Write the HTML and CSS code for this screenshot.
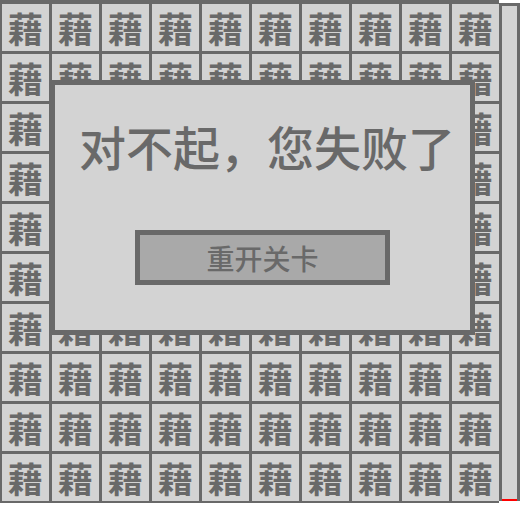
FILE: index.html
```html
<!DOCTYPE html>
<html lang="zh-CN">
<head>
<meta charset="utf-8">
<title>游戏</title>
<link rel="stylesheet" href="styles.css">
</head>
<body>
<div class="stage">
  <div class="board">
    <div class="cell">藉</div><div class="cell">藉</div><div class="cell">藉</div><div class="cell">藉</div><div class="cell">藉</div><div class="cell">藉</div><div class="cell">藉</div><div class="cell">藉</div><div class="cell">藉</div><div class="cell">藉</div>
    <div class="cell">藉</div><div class="cell">藉</div><div class="cell">藉</div><div class="cell">藉</div><div class="cell">藉</div><div class="cell">藉</div><div class="cell">藉</div><div class="cell">藉</div><div class="cell">藉</div><div class="cell">藉</div>
    <div class="cell">藉</div><div class="cell">藉</div><div class="cell">藉</div><div class="cell">藉</div><div class="cell">藉</div><div class="cell">藉</div><div class="cell">藉</div><div class="cell">藉</div><div class="cell">藉</div><div class="cell">藉</div>
    <div class="cell">藉</div><div class="cell">藉</div><div class="cell">藉</div><div class="cell">藉</div><div class="cell">藉</div><div class="cell">藉</div><div class="cell">藉</div><div class="cell">藉</div><div class="cell">藉</div><div class="cell">藉</div>
    <div class="cell">藉</div><div class="cell">藉</div><div class="cell">藉</div><div class="cell">藉</div><div class="cell">藉</div><div class="cell">藉</div><div class="cell">藉</div><div class="cell">藉</div><div class="cell">藉</div><div class="cell">藉</div>
    <div class="cell">藉</div><div class="cell">藉</div><div class="cell">藉</div><div class="cell">藉</div><div class="cell">藉</div><div class="cell">藉</div><div class="cell">藉</div><div class="cell">藉</div><div class="cell">藉</div><div class="cell">藉</div>
    <div class="cell">藉</div><div class="cell">藉</div><div class="cell">藉</div><div class="cell">藉</div><div class="cell">藉</div><div class="cell">藉</div><div class="cell">藉</div><div class="cell">藉</div><div class="cell">藉</div><div class="cell">藉</div>
    <div class="cell">藉</div><div class="cell">藉</div><div class="cell">藉</div><div class="cell">藉</div><div class="cell">藉</div><div class="cell">藉</div><div class="cell">藉</div><div class="cell">藉</div><div class="cell">藉</div><div class="cell">藉</div>
    <div class="cell">藉</div><div class="cell">藉</div><div class="cell">藉</div><div class="cell">藉</div><div class="cell">藉</div><div class="cell">藉</div><div class="cell">藉</div><div class="cell">藉</div><div class="cell">藉</div><div class="cell">藉</div>
    <div class="cell">藉</div><div class="cell">藉</div><div class="cell">藉</div><div class="cell">藉</div><div class="cell">藉</div><div class="cell">藉</div><div class="cell">藉</div><div class="cell">藉</div><div class="cell">藉</div><div class="cell">藉</div>
  </div>
  <div class="timer"><div class="timer-fill"></div></div>
  <div class="dialog">
    <div class="dialog-title">对不起，您失败了</div>
    <div class="dialog-button">重开关卡</div>
  </div>
</div>
</body>
</html>
```
FILE: styles.css
```css
html, body {
  margin: 0;
  padding: 0;
  background: #ffffff;
}
body {
  font-family: "Noto Sans CJK SC", "Noto Sans", sans-serif;
  color: #696969;
}
.stage {
  position: relative;
  display: flex;
  align-items: flex-start;
  width: 525px;
  height: 505px;
}
.board {
  display: grid;
  grid-template-columns: repeat(10, 47px);
  grid-auto-rows: 47px;
  gap: 3px;
  padding: 4px 0 2px 2px;
  background: #696969;
}
.cell {
  background: #d3d3d3;
  display: flex;
  align-items: center;
  justify-content: center;
  font-size: 35px;
  font-weight: bold;
  line-height: 1;
  color: #696969;
}
.timer {
  display: flex;
  flex-direction: column;
  justify-content: flex-end;
  margin-top: 3px;
  width: 15px;
  height: 495px;
  border: 3px solid #696969;
  border-bottom: none;
  background: #d3d3d3;
}
.timer-fill {
  height: 2px;
  background: #ff0000;
}
.dialog {
  position: absolute;
  left: 50px;
  top: 80px;
  width: 415px;
  height: 245px;
  border: 5px solid #696969;
  background: #d3d3d3;
  display: flex;
  flex-direction: column;
  align-items: center;
}
.dialog-title {
  margin-top: 37px;
  padding-left: 9px;
  font-size: 47px;
  line-height: 47px;
  font-weight: 500;
  color: #696969;
  white-space: nowrap;
}
.dialog-button {
  margin-top: 61px;
  box-sizing: border-box;
  width: 255px;
  height: 55px;
  border: 5px solid #696969;
  background: #a9a9a9;
  display: flex;
  align-items: center;
  justify-content: center;
  font-size: 28px;
  font-weight: 500;
  color: #696969;
}
```
